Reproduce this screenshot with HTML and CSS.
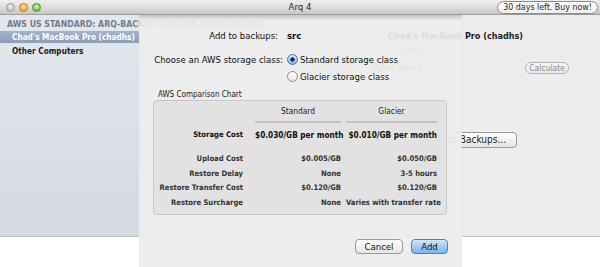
FILE: index.html
```html
<!DOCTYPE html>
<html>
<head>
<meta charset="utf-8">
<title>Arq 4</title>
<link rel="stylesheet" href="styles.css">
</head>
<body>
<div class="window">
  <div class="titlebar">
    <div class="lights"><span class="light close"></span><span class="light min"></span><span class="light zoom"></span></div>
    <div class="title">Arq 4</div>
    <div class="tb-right"><span class="buy">30 days left. Buy now!</span></div>
  </div>
  <div class="content">
    <div class="sidebar">
      <div class="sb-head">AWS US STANDARD: ARQ-BACKUP-CHADHS-MACBOOKPRO</div>
      <div class="sb-item selected">Chad's MacBook Pro (chadhs)</div>
      <div class="sb-item">Other Computers</div>
    </div>
    <div class="main">
      <div class="main-title">Chad's MacBook Pro (chadhs)</div>
      <div class="detail">
        <div class="comp-icon"></div>
        <div class="info">
          <span class="k">UUID:</span><span class="v"></span>
          <span class="k">Bytes Stored:</span><span class="v">--</span>
        </div>
        <span class="btn calc">Calculate</span>
      </div>
      <div class="add-row"><span class="btn add-folder">Add a Folder to Backups...</span></div>
    </div>
  </div>
  <div class="sheet">
    <div class="form">
      <div class="lbl first">Add to backups:</div>
      <div class="val">src</div>
      <div class="lbl">Choose an AWS storage class:</div>
      <div class="radios">
        <div class="radio"><span class="rb on"></span>Standard storage class</div>
        <div class="radio"><span class="rb"></span>Glacier storage class</div>
      </div>
    </div>
    <div class="chart-label">AWS Comparison Chart</div>
    <div class="chart">
      <div class="row hd"><div></div><div>Standard</div><div>Glacier</div></div>
      <div class="row st"><div>Storage Cost</div><div>$0.030/GB per month</div><div>$0.010/GB per month</div></div>
      <div class="row up"><div>Upload Cost</div><div>$0.005/GB</div><div>$0.050/GB</div></div>
      <div class="row"><div>Restore Delay</div><div>None</div><div>3-5 hours</div></div>
      <div class="row"><div>Restore Transfer Cost</div><div>$0.120/GB</div><div>$0.120/GB</div></div>
      <div class="row"><div>Restore Surcharge</div><div>None</div><div>Varies with transfer rate</div></div>
    </div>
    <div class="actions">
      <span class="push cancel">Cancel</span>
      <span class="push default">Add</span>
    </div>
  </div>
</div>
</body>
</html>
```

FILE: styles.css
```css
* { box-sizing: border-box; }
html, body { margin: 0; padding: 0; }
body {
  background: #ffffff;
  font-family: "DejaVu Sans Condensed", "DejaVu Sans", sans-serif;
  font-stretch: condensed;
  color: #1c1c1c;
}
.window { position: relative; width: 600px; height: 267px; overflow: hidden; }

/* title bar */
.titlebar {
  height: 15px;
  display: grid;
  grid-template-columns: 1fr auto 1fr;
  align-items: center;
  background: linear-gradient(#eeeeee, #dcdcdc 55%, #c6c6c6);
  border-bottom: 1px solid #9d9d9d;
}
.lights { display: flex; gap: 4px; padding-left: 6px; }
.light { width: 9px; height: 9px; border-radius: 50%; }
.close { background: radial-gradient(circle at 50% 35%, #f6f6f6, #cacaca 60%, #acacac); border: 1px solid #9c9c9c; }
.min { background: radial-gradient(circle at 50% 35%, #ffeaa6, #f5b23c 60%, #d38c18); border: 1px solid #c28012; }
.zoom { background: radial-gradient(circle at 50% 35%, #d2f2ad, #80c655 60%, #519c2e); border: 1px solid #4b8d2b; }
.title { font-size: 9.5px; color: #2a2a2a; line-height: 14px; }
.tb-right { display: flex; justify-content: flex-end; padding-right: 2px; }
.buy {
  font-size: 8.8px;
  line-height: 11px;
  padding: 0 5px;
  border: 1px solid #8d8d8d;
  border-radius: 7px;
  background: linear-gradient(#ffffff, #efefef);
  color: #1f1f1f;
  white-space: nowrap;
}

/* window content */
.content { display: flex; height: 222px; }
.sidebar {
  position: relative;
  z-index: 1;
  width: 139px;
  flex: none;
  background: linear-gradient(#e3e7ee, #d4dae2);
  border-bottom: 1px solid #bcc2ca;
}
.sb-head {
  font-size: 8.7px;
  font-weight: bold;
  color: #737c89;
  line-height: 12px;
  padding: 3px 0 0 7px;
  white-space: nowrap;
}
.sb-item {
  font-size: 8.2px;
  font-weight: bold;
  line-height: 12px;
  padding-left: 12px;
  margin-top: 2px;
  white-space: nowrap;
  color: #1a1a1a;
}
.sb-item.selected {
  margin-top: 1px;
  background: linear-gradient(#a4b3ca, #8c9db9);
  color: #ffffff;
}

.main {
  flex: 1;
  background: #ececec;
  border-bottom: 1px solid #c4c4c4;
  padding-top: 15px;
}
.main-title {
  font-size: 9px;
  font-weight: bold;
  line-height: 12px;
  padding-left: 249px;
  white-space: nowrap;
}
.detail { display: flex; align-items: flex-start; margin-left: 172px; margin-top: 1px; }
.comp-icon {
  width: 39px;
  height: 37px;
  background: linear-gradient(#dde2ea, #ccd3de);
  border: 1px solid #c3c9d2;
  border-radius: 2px;
}
.info {
  display: grid;
  grid-template-columns: 62px auto;
  column-gap: 5px;
  row-gap: 4px;
  margin-left: 12px;
  margin-top: 2px;
  font-size: 8.5px;
  line-height: 12px;
  color: #444;
}
.k { text-align: right; white-space: nowrap; }
.btn {
  font-size: 9px;
  line-height: 13px;
  padding: 0 6px;
  border: 1px solid #9a9a9a;
  border-radius: 4px;
  background: linear-gradient(#ffffff, #f2f2f2 50%, #e4e4e4);
  white-space: nowrap;
}
.btn.add-folder { font-size: 10px; padding: 0 10px 0 6px; line-height: 14px; }
.btn.calc {
  margin-left: auto;
  margin-right: 31px;
  margin-top: 19px;
  font-size: 8.5px;
  line-height: 10px;
  padding: 0 3px;
  border-color: #b3b3b3;
  border-radius: 6px;
  color: #8a8a8a;
  background: linear-gradient(#f7f7f7, #e9e9e9);
}
.add-row { display: flex; justify-content: flex-end; padding-right: 83px; margin-top: 52px; }

/* sheet */
.sheet {
  position: absolute;
  z-index: 2;
  left: 139px;
  top: 15px;
  width: 323px;
  height: 262px;
  padding: 13px 14px 0;
  background: rgba(237, 237, 237, 0.92);
  box-shadow: inset 0 5px 4px -3px rgba(0, 0, 0, 0.22);
}
.form {
  display: grid;
  grid-template-columns: 130px auto;
  column-gap: 4px;
  row-gap: 7px;
  font-size: 9.5px;
  color: #111;
}
.lbl { text-align: right; line-height: 17px; white-space: nowrap; }
.lbl.first { line-height: 16px; padding-right: 5px; }
.val { line-height: 16px; font-weight: bold; }
.radio { display: flex; align-items: center; gap: 2px; line-height: 17px; white-space: nowrap; }
.rb {
  width: 11px;
  height: 11px;
  border-radius: 50%;
  border: 1px solid #8f8f8f;
  background: linear-gradient(#ffffff, #e6e6e6);
  flex: none;
}
.rb.on {
  border-color: #4a75ac;
  background: radial-gradient(circle, #17263a 0 1.8px, transparent 2.4px), linear-gradient(#cfe4fa, #86b7ea);
}
.chart-label { font-size: 8px; line-height: 11px; margin-top: 4px; padding-left: 5px; color: #222; white-space: nowrap; }
.chart {
  width: 294px;
  height: 115px;
  border: 1px solid #c7c7c7;
  border-radius: 4px;
  background: #e2e2e2;
  display: grid;
  grid-template-columns: 89px 98px 96px;
  align-content: start;
  padding-top: 3px;
}
.row { display: contents; }
.row > div {
  white-space: nowrap;
  line-height: 14.5px;
  font-size: 7.6px;
  font-weight: bold;
  text-align: right;
  color: #333;
}
.row > div:nth-child(2) { margin-left: 12px; }
.row > div:nth-child(3) { margin-left: 5px; }
.row.hd > div { line-height: 15px; padding-bottom: 2px; font-size: 8.3px; font-weight: normal; text-align: center; color: #222; }
.row.hd > div:nth-child(2), .row.hd > div:nth-child(3) { border-bottom: 2px solid #c3c3c3; }
.row.st > div { padding-top: 4px; line-height: 16px; color: #111; }
.row.st > div:nth-child(2), .row.st > div:nth-child(3) { font-size: 8.2px; }
.row.up > div { padding-top: 9px; }

.actions { display: flex; justify-content: flex-end; gap: 8px; margin-top: 24px; }
.push {
  height: 15px;
  font-size: 9.5px;
  line-height: 13px;
  text-align: center;
  border-radius: 4px;
  border: 1px solid #999999;
  background: linear-gradient(#ffffff, #f3f3f3 50%, #e5e5e5);
  color: #111;
}
.push.cancel { width: 48px; }
.push.default {
  width: 37px;
  border-color: #4f80b8;
  background: linear-gradient(#d3e7fc, #a2ccf5 50%, #7db3ee);
}
```
